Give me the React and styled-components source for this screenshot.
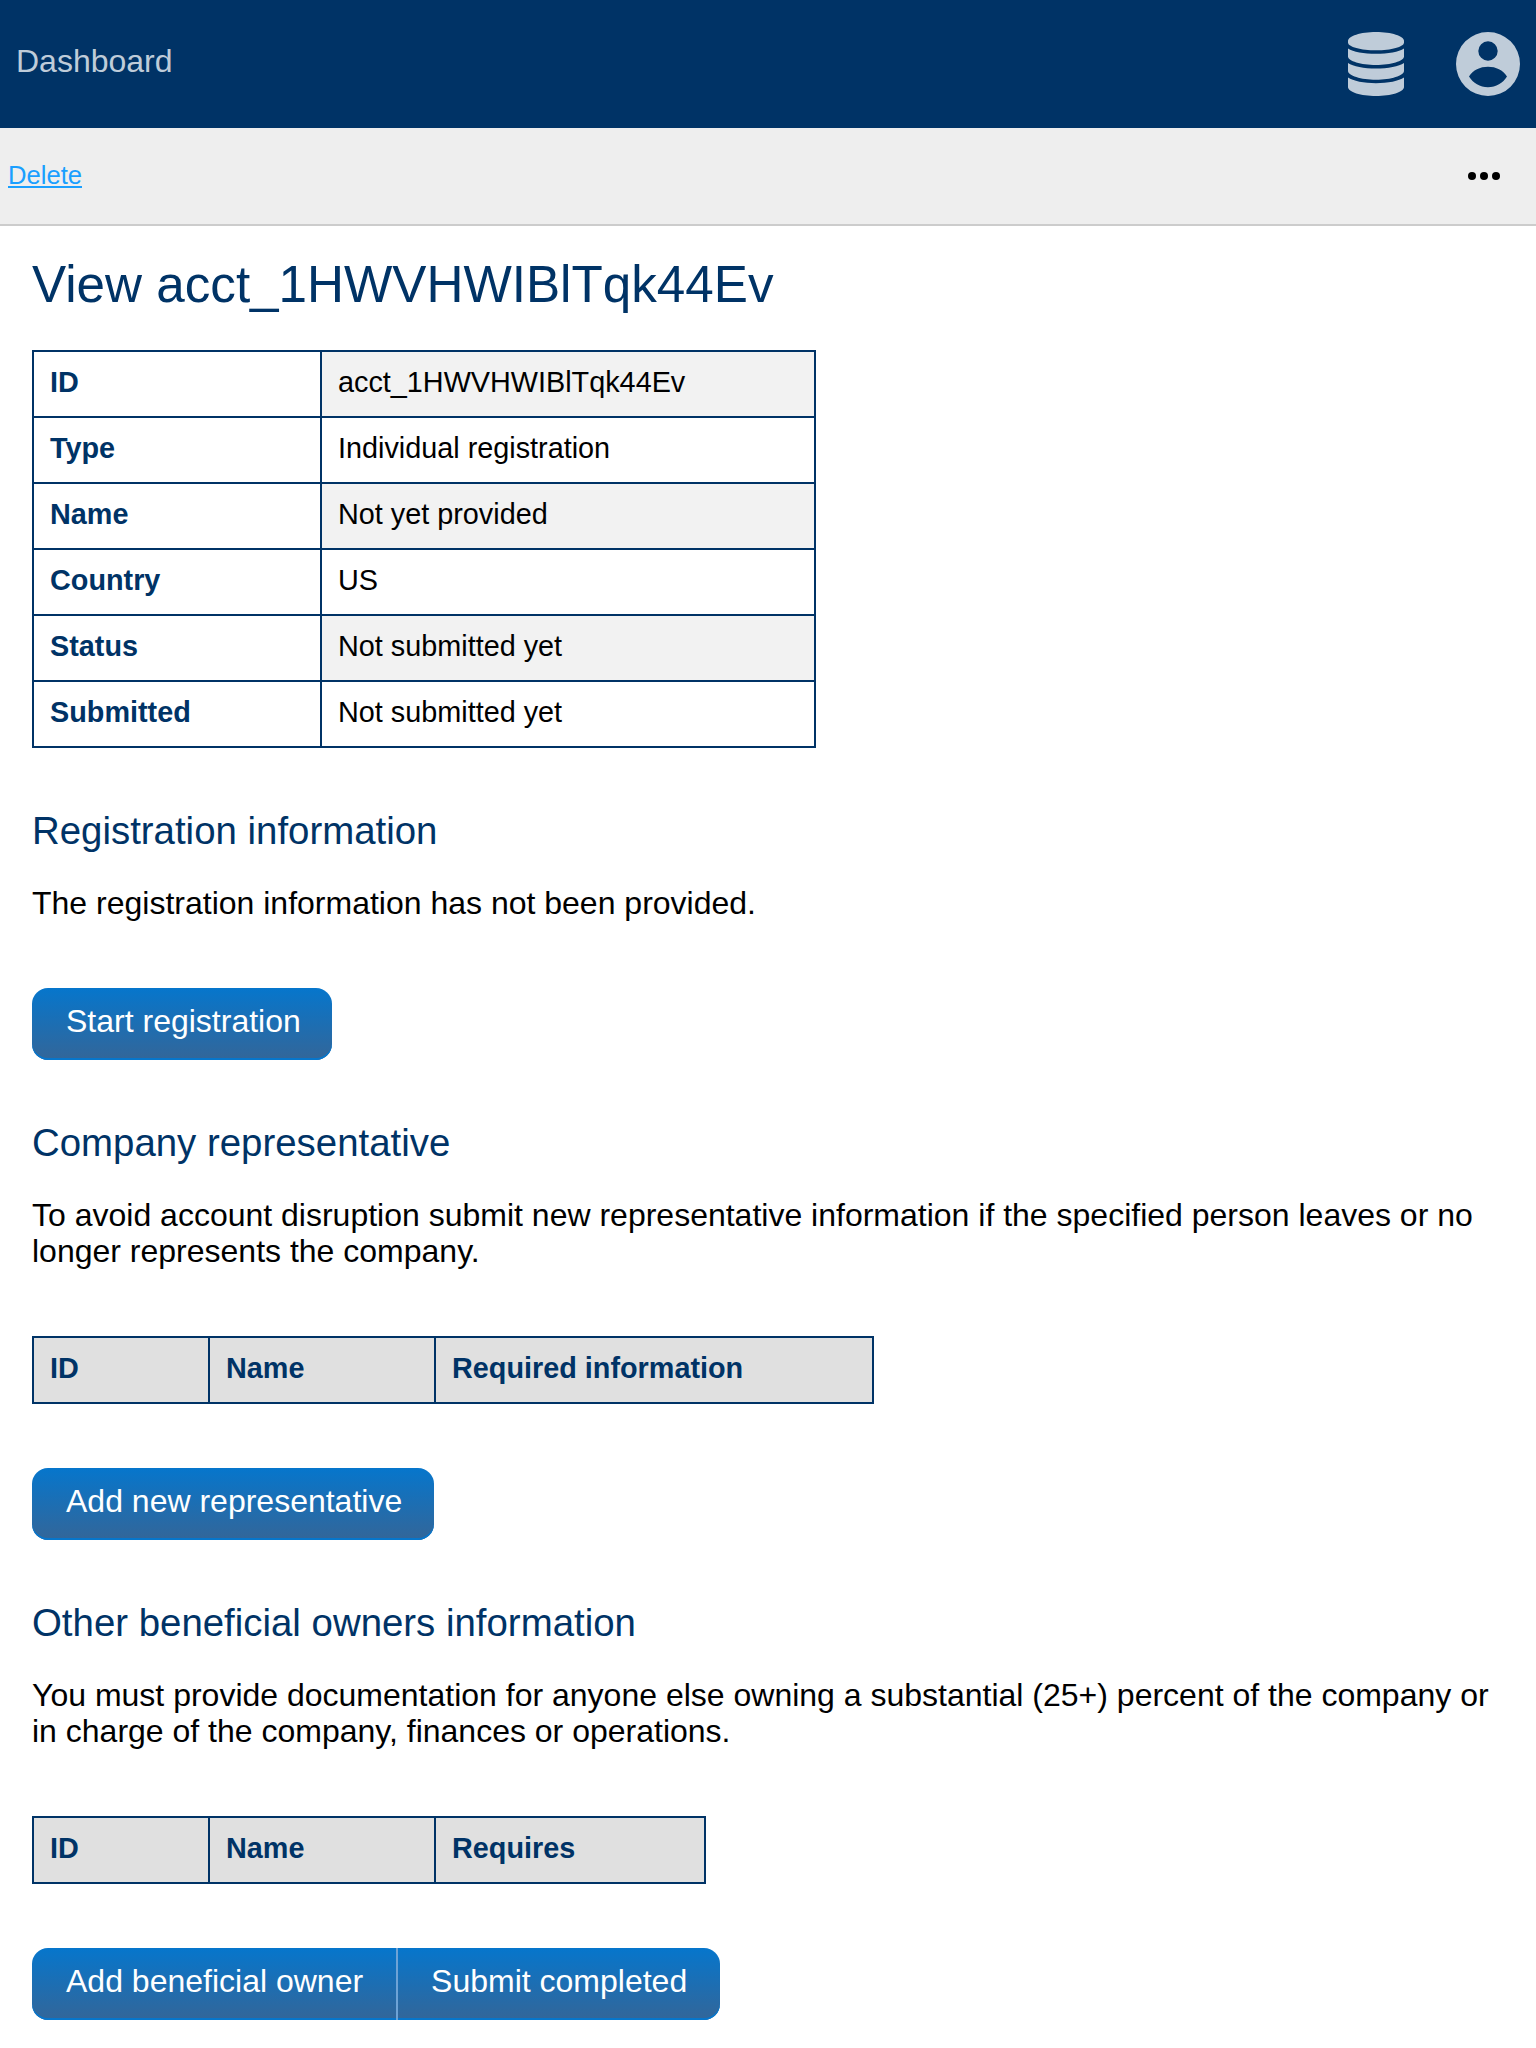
import React from "react";
import styled, { createGlobalStyle } from "styled-components";

const Global = createGlobalStyle`
  html, body { margin: 0; padding: 0; background: #fff; }
  body { font-family: "Liberation Sans", Arial, sans-serif; font-size: 32px; color: #000; }
`;

const Header = styled.header`
  height: 128px;
  background: #003366;
  display: flex;
  align-items: center;
  justify-content: space-between;
  padding: 0 16px;
  color: #bfccd9;
`;
const Brand = styled.a`
  font-size: 32px;
  color: #bfccd9;
  margin-top: -6px;
`;
const HeaderIcons = styled.div`
  display: flex;
  align-items: center;
  gap: 52px;
`;
const Toolbar = styled.nav`
  height: 96px;
  background: #eeeeee;
  border-bottom: 2px solid #cccccc;
  display: flex;
  align-items: center;
  justify-content: space-between;
  padding: 0 36px 0 8px;
`;
const ToolLink = styled.a`
  font-size: 25.6px;
  color: #1a9fff;
  text-decoration: underline;
  margin-top: -2px;
`;
const Main = styled.main`
  padding: 0 32px;
`;
const Title = styled.h1`
  font-size: 51.2px;
  font-weight: 400;
  color: #003366;
  margin: 29px 0 36px;
  line-height: 59px;
`;
const SectionTitle = styled.h2`
  font-size: 38.4px;
  font-weight: 400;
  color: #003366;
  margin: 0;
  line-height: 44px;
`;
const Text = styled.p`
  font-size: 32px;
  line-height: 36px;
  margin: 32px 0 0;
`;
const Table = styled.table`
  border-collapse: collapse;
  table-layout: fixed;
  width: ${(p) => p.$width}px;
  margin-top: ${(p) => (p.$flush ? 0 : 67)}px;
  font-size: 28.8px;
`;
const Th = styled.th`
  box-sizing: border-box;
  border: 2px solid #003366;
  padding: 14px 16px 18px;
  text-align: left;
  font-weight: 700;
  color: #003366;
  background: ${(p) => (p.$head ? "#e0e0e0" : "#fff")};
  width: ${(p) => (p.$width ? `${p.$width}px` : "auto")};
  line-height: 32px;
`;
const Td = styled.td`
  box-sizing: border-box;
  border: 2px solid #003366;
  padding: 14px 16px 18px;
  background: ${(p) => (p.$shade ? "#f2f2f2" : "#fff")};
  line-height: 32px;
`;
const ButtonRow = styled.div`
  display: inline-flex;
  margin-top: ${(p) => p.$top}px;
  vertical-align: top;
`;
const Button = styled.button`
  font-family: inherit;
  font-size: 32px;
  line-height: 36px;
  color: #fff;
  height: 72px;
  padding: 0 ${(p) => p.$right || 31}px 6px ${(p) => p.$left || 34}px;
  border: 0;
  border-left: ${(p) => (p.$joined ? "2px solid #6ea3d6" : "0")};
  border-radius: ${(p) => (p.$first && p.$last ? "16px" : p.$first ? "16px 0 0 16px" : p.$last ? "0 16px 16px 0" : "0")};
  background: linear-gradient(#0676cc, #336699);
  box-shadow: inset 0 -2px 0 #0676cc;
`;
const Section = styled.section`
  margin-top: ${(p) => p.$top}px;
`;

const DatabaseIcon = () => (
  <svg width="56" height="64" viewBox="0 0 56 64" fill="#bfccd9">
    <path d="M0 9C0 4 12.5 0 28 0s28 4 28 9v1.500C56 15 43 18.300 28 18.300S0 15 0 10.500Z" />
    <path d="M0 16.500C5 20 16 21.800 28 21.800S51 20 56 16.500V24.500C56 29 43 33 28 33S0 29 0 24.500Z" />
    <path d="M0 31C5 34.500 16 36.600 28 36.600S51 34.500 56 31V39C56 43.500 43 47.800 28 47.800S0 43.500 0 39Z" />
    <path d="M0 45.500C5 49 16 51.200 28 51.200S51 49 56 45.500V55C56 60 43 64 28 64S0 60 0 55Z" />
  </svg>
);
const UserIcon = () => (
  <svg width="64" height="64" viewBox="0 0 64 64">
    <path
      fill="#bfccd9"
      fillRule="evenodd"
      d="M32 0a32 32 0 1 1 0 64a32 32 0 1 1 0-64ZM32 9.300a9.700 9.700 0 1 0 0 19.400a9.700 9.700 0 1 0 0-19.400ZM32 34.700C24 34.700 17 38 13 44.500C17 51 24 55.300 32 55.300S47 51 51 44.500C47 38 40 34.700 32 34.700Z"
    />
  </svg>
);
const DotsIcon = () => (
  <svg width="32" height="8" viewBox="0 0 32 8" fill="#000">
    <circle cx="4" cy="4" r="4" />
    <circle cx="16" cy="4" r="4" />
    <circle cx="28" cy="4" r="4" />
  </svg>
);

const details = [
  ["ID", "acct_1HWVHWIBlTqk44Ev"],
  ["Type", "Individual registration"],
  ["Name", "Not yet provided"],
  ["Country", "US"],
  ["Status", "Not submitted yet"],
  ["Submitted", "Not submitted yet"],
];

export default function App() {
  return (
    <>
      <Global />
      <Header>
        <Brand>Dashboard</Brand>
        <HeaderIcons>
          <DatabaseIcon />
          <UserIcon />
        </HeaderIcons>
      </Header>
      <Toolbar>
        <ToolLink href="#">Delete</ToolLink>
        <DotsIcon />
      </Toolbar>
      <Main>
        <Title>View acct_1HWVHWIBlTqk44Ev</Title>
        <Table $width={784} $flush>
          <tbody>
            {details.map(([k, v], i) => (
              <tr key={k}>
                <Th $width={288}>{k}</Th>
                <Td $shade={i % 2 === 0}>{v}</Td>
              </tr>
            ))}
          </tbody>
        </Table>
        <Section $top={61}>
          <SectionTitle>Registration information</SectionTitle>
          <Text>The registration information has not been provided.</Text>
          <ButtonRow $top={67}>
            <Button $first $last>Start registration</Button>
          </ButtonRow>
        </Section>
        <Section $top={61}>
          <SectionTitle>Company representative</SectionTitle>
          <Text>
            To avoid account disruption submit new representative information if the specified person leaves or no longer represents the company.
          </Text>
          <Table $width={842}>
            <thead>
              <tr>
                <Th $head $width={176}>ID</Th>
                <Th $head $width={226}>Name</Th>
                <Th $head>Required information</Th>
              </tr>
            </thead>
          </Table>
          <ButtonRow $top={64}>
            <Button $first $last $right={32}>Add new representative</Button>
          </ButtonRow>
        </Section>
        <Section $top={61}>
          <SectionTitle>Other beneficial owners information</SectionTitle>
          <Text>
            You must provide documentation for anyone else owning a substantial (25+) percent of the company or in charge of the company, finances or operations.
          </Text>
          <Table $width={674}>
            <thead>
              <tr>
                <Th $head $width={176}>ID</Th>
                <Th $head $width={226}>Name</Th>
                <Th $head>Requires</Th>
              </tr>
            </thead>
          </Table>
          <ButtonRow $top={64}>
            <Button $first $right={33}>Add beneficial owner</Button>
            <Button $last $joined $left={33} $right={33}>Submit completed</Button>
          </ButtonRow>
        </Section>
      </Main>
    </>
  );
}
